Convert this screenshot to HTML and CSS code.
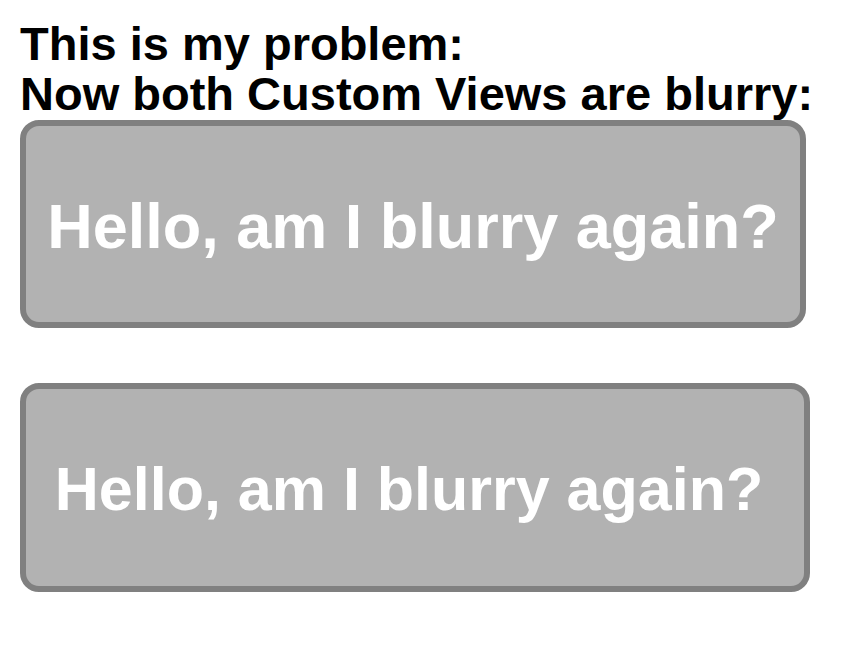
FILE: index.html
```html
<!DOCTYPE html>
<html>
<head>
<meta charset="utf-8">
<link rel="stylesheet" href="styles.css">
</head>
<body>
<div class="page">
  <h1 class="title">This is my problem:<br>Now both Custom Views are blurry:</h1>
  <div class="view view-one"><span class="label">Hello, am I blurry again?</span></div>
  <div class="view view-two"><span class="label label-two">Hello, am I blurry again?</span></div>
</div>
</body>
</html>
```
FILE: styles.css
```css
html, body {
  margin: 0;
  padding: 0;
  background: #ffffff;
}
.page {
  display: flex;
  flex-direction: column;
  align-items: flex-start;
  padding: 19px 0 0 20px;
  font-family: "Liberation Sans", Arial, sans-serif;
}
.title {
  margin: 0;
  font-size: 47px;
  line-height: 50px;
  font-weight: bold;
  color: #000;
}
.view {
  box-sizing: border-box;
  display: flex;
  align-items: center;
  justify-content: center;
  background: #b2b2b2;
  border: 6px solid #808080;
  border-radius: 19px;
}
.view-one {
  margin-top: 1px;
  width: 786px;
  height: 208px;
}
.view-two {
  margin-top: 55px;
  width: 790px;
  height: 209px;
}
.label {
  color: #ffffff;
  font-weight: bold;
  font-size: 63px;
  line-height: 1;
  filter: blur(0.7px);
  margin-top: 4px;
}
.label-two {
  font-size: 61px;
  margin-right: 12px;
}
```
